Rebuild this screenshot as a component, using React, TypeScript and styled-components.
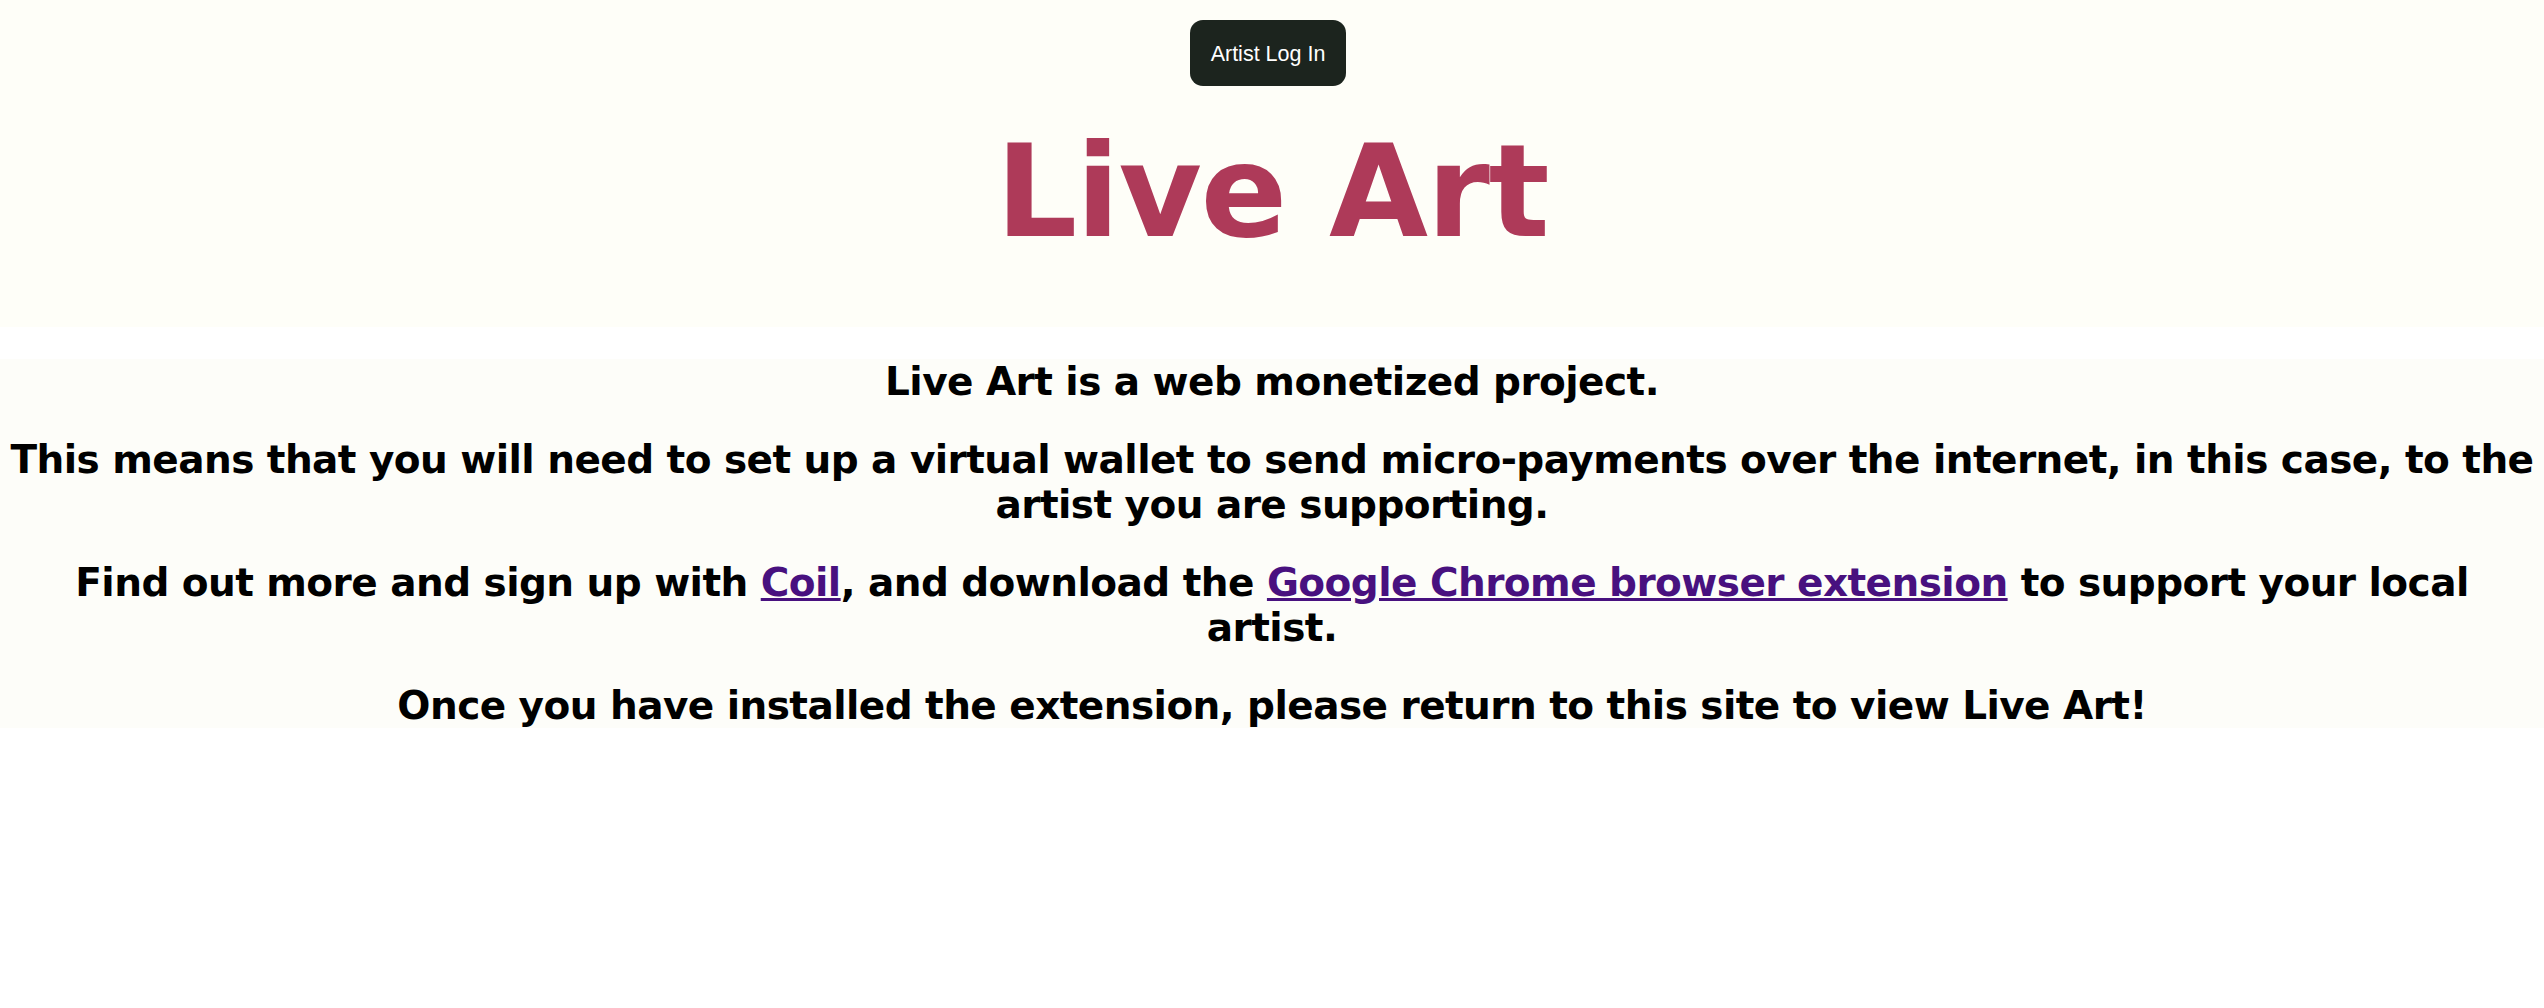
import React from 'react';
import styled, { createGlobalStyle } from 'styled-components';

const GlobalStyle = createGlobalStyle`
    html, body {
        margin: 0;
        padding: 0;
        background: #ffffff;
    }
    body {
        font-family: 'DejaVu Sans', Verdana, sans-serif;
    }
`;

const Header = styled.header`
    background: #fefef8;
    display: flex;
    flex-direction: column;
    align-items: center;
    padding: 20px 0 61px;
`;

const LoginButton = styled.button`
    height: 66px;
    padding: 2px 21px 0;
    margin-right: 8px;
    border: none;
    border-radius: 13px;
    background: #1c241e;
    color: #ffffff;
    font-family: 'Liberation Sans', Arial, sans-serif;
    font-size: 21.5px;
    cursor: pointer;
`;

const Title = styled.h1`
    margin: 31px 0 0;
    font-family: 'DejaVu Sans', Verdana, sans-serif;
    font-size: 128px;
    font-weight: 700;
    line-height: normal;
    letter-spacing: -1.4px;
    color: #ae3a59;
`;

const Content = styled.main`
    background: #fdfdf9;
    text-align: center;
    padding: 0 6px;
`;

const Message = styled.h2`
    margin: 32px 0;
    font-family: 'DejaVu Sans', Verdana, sans-serif;
    font-size: 39px;
    font-weight: 700;
    line-height: 45.5px;
    letter-spacing: -0.56px;
    color: #000000;

    &:last-child {
        margin-bottom: 0;
    }
`;

const Link = styled.a`
    color: #48117f;
    text-decoration: underline;
`;

const App: React.FC = () => {
    return (
        <>
            <GlobalStyle />
            <Header>
                <LoginButton>Artist Log In</LoginButton>
                <Title>Live Art</Title>
            </Header>
            <Content>
                <Message>Live Art is a web monetized project.</Message>
                <Message>
                    This means that you will need to set up a virtual wallet to send micro-payments over the
                    internet, in this case, to the artist you are supporting.
                </Message>
                <Message>
                    Find out more and sign up with <Link href="#">Coil</Link>, and download the{' '}
                    <Link href="#">Google Chrome browser extension</Link> to support your local artist.
                </Message>
                <Message>Once you have installed the extension, please return to this site to view Live Art!</Message>
            </Content>
        </>
    );
};

export default App;
